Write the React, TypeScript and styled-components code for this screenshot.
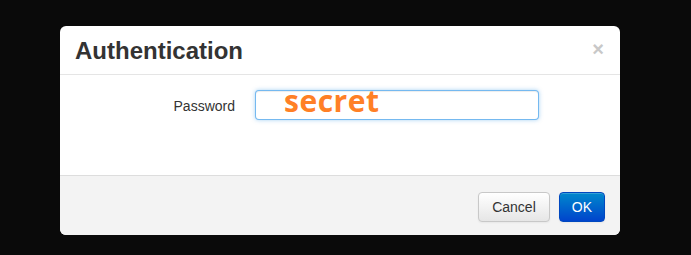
import styled, { createGlobalStyle } from "styled-components";

const GlobalStyle = createGlobalStyle`
    html, body {
        margin: 0;
        padding: 0;
        background-color: #0a0a0a;
        font-family: "Liberation Sans", Arial, sans-serif;
    }
`;

const Page = styled.div`
    width: 691px;
    height: 255px;
    padding: 26px 0 0 60px;
    box-sizing: border-box;
`;

const Modal = styled.div`
    width: 560px;
    height: 209px;
    background-color: #fff;
    border-radius: 6px;
    overflow: hidden;
    display: flex;
    flex-direction: column;
`;

const Header = styled.div`
    height: 48px;
    padding: 0 15px;
    border-bottom: 1px solid #e5e5e5;
    display: flex;
    align-items: center;
    justify-content: space-between;
`;

const Title = styled.h3`
    margin: 0;
    font-size: 24px;
    font-weight: bold;
    color: #333;
    line-height: 30px;
    padding-top: 1px;
`;

const Close = styled.span`
    font-size: 20px;
    font-weight: bold;
    color: #c8c8c8;
    line-height: 20px;
    margin-top: -2px;
    margin-right: 1px;
`;

const Body = styled.div`
    flex: 1;
    padding: 15px;
`;

const ControlGroup = styled.div`
    display: flex;
    align-items: flex-start;
`;

const Label = styled.label`
    width: 160px;
    padding-top: 6px;
    margin-right: 20px;
    text-align: right;
    font-size: 14px;
    line-height: 20px;
    color: #333;
`;

const InputWrap = styled.div`
    position: relative;
`;

const Input = styled.div`
    width: 284px;
    height: 30px;
    box-sizing: border-box;
    border: 1px solid rgba(82, 168, 236, 0.8);
    border-radius: 4px;
    box-shadow: inset 0 1px 1px rgba(0, 0, 0, 0.075), 0 0 4px rgba(82, 168, 236, 0.5);
    background-color: #fff;
`;

const Secret = styled.span`
    position: absolute;
    left: 29px;
    top: -4px;
    font-family: "Open Sans", sans-serif;
    font-weight: 700;
    font-size: 30px;
    letter-spacing: 0.5px;
    line-height: 30px;
    color: #ff8026;
`;

const Footer = styled.div`
    height: 60px;
    box-sizing: border-box;
    padding: 0 15px;
    background-color: #f3f3f3;
    border-top: 1px solid #ddd;
    display: flex;
    align-items: center;
    justify-content: flex-end;
    gap: 9px;
`;

const Button = styled.button<{ $primary?: boolean }>`
    height: 30px;
    padding: 0 ${(p) => (p.$primary ? "12px" : "13px")};
    font-family: "Liberation Sans", Arial, sans-serif;
    font-size: 14px;
    border-radius: 4px;
    margin-top: 2px;
    color: ${(p) => (p.$primary ? "#fff" : "#333")};
    border: 1px solid ${(p) => (p.$primary ? "#0048c0" : "#c8c8c8")};
    background-image: ${(p) =>
        p.$primary
            ? "linear-gradient(to bottom, #0088cc, #0044cc)"
            : "linear-gradient(to bottom, #ffffff, #e6e6e6)"};
    box-shadow: inset 0 1px 0 rgba(255, 255, 255, 0.2), 0 1px 2px rgba(0, 0, 0, 0.05);
`;

function App() {
    return (
        <Page>
            <GlobalStyle />
            <Modal>
                <Header>
                    <Title>Authentication</Title>
                    <Close>×</Close>
                </Header>
                <Body>
                    <ControlGroup>
                        <Label>Password</Label>
                        <InputWrap>
                            <Input />
                            <Secret>secret</Secret>
                        </InputWrap>
                    </ControlGroup>
                </Body>
                <Footer>
                    <Button>Cancel</Button>
                    <Button $primary>OK</Button>
                </Footer>
            </Modal>
        </Page>
    );
}

export default App;
